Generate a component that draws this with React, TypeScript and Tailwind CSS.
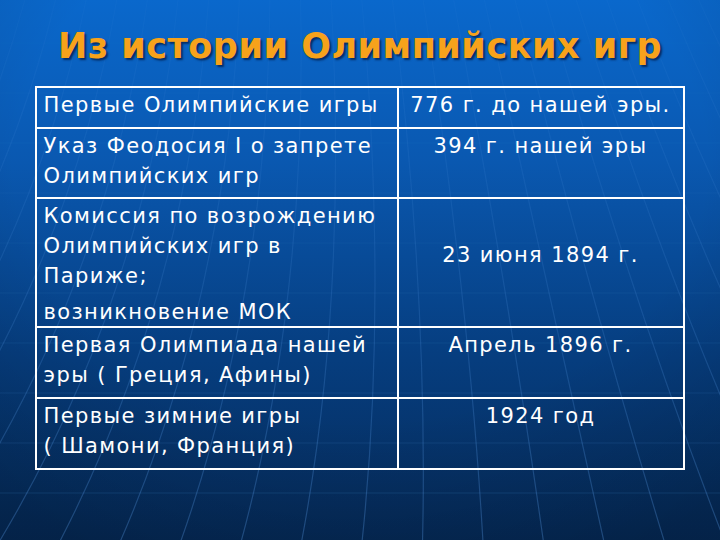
import React from "react";

const rows: { left: string[]; right: string; h: string; rightAlign: "top" | "middle" }[] = [
  { left: ["Первые Олимпийские игры"], right: "776 г. до нашей эры.", h: "h-[39px]", rightAlign: "top" },
  { left: ["Указ Феодосия I о запрете", "Олимпийских игр"], right: "394 г. нашей эры", h: "h-[70px]", rightAlign: "top" },
  { left: ["Комиссия по возрождению", "Олимпийских игр в", "Париже;", "возникновение МОК"], right: "23 июня 1894 г.", h: "h-[129px]", rightAlign: "middle" },
  { left: ["Первая Олимпиада нашей", "эры ( Греция, Афины)"], right: "Апрель 1896 г.", h: "h-[71px]", rightAlign: "top" },
  { left: ["Первые зимние игры", "( Шамони, Франция)"], right: "1924 год", h: "h-[71px]", rightAlign: "top" },
];

function Background() {
  const curves: string[] = [];
  for (let i = -14; i <= 14; i++) {
    const xb = 360 + i * 62;
    const xt = 360 + i * 30;
    const cx = 360 + i * 40 + 30;
    curves.push(`M ${xt} -20 Q ${cx} 300 ${xb} 560`);
  }
  const hs: number[] = [];
  for (let y = 43; y < 540; y += 50) hs.push(y);
  return (
    <svg className="absolute inset-0 w-full h-full pointer-events-none" viewBox="0 0 720 540" preserveAspectRatio="none">
      <defs>
        <linearGradient id="bg" x1="0" y1="0" x2="0" y2="1">
          <stop offset="0" stopColor="#0a68cc" />
          <stop offset="0.3" stopColor="#0a58b0" />
          <stop offset="0.65" stopColor="#063e80" />
          <stop offset="1" stopColor="#052a58" />
        </linearGradient>
        <radialGradient id="vig" cx="0.5" cy="0.3" r="0.8">
          <stop offset="0.6" stopColor="#000" stopOpacity="0" />
          <stop offset="1" stopColor="#000" stopOpacity="0.18" />
        </radialGradient>
        <linearGradient id="fade" x1="0" y1="0" x2="0" y2="1">
          <stop offset="0" stopColor="#fff" stopOpacity="0.15" />
          <stop offset="0.5" stopColor="#fff" stopOpacity="0.5" />
          <stop offset="1" stopColor="#fff" stopOpacity="1" />
        </linearGradient>
        <mask id="m">
          <rect width="720" height="540" fill="url(#fade)" />
        </mask>
      </defs>
      <rect width="720" height="540" fill="url(#bg)" />
      <rect width="720" height="540" fill="url(#vig)" />
      <g mask="url(#m)">
        {hs.map((y) => (
          <line key={y} x1="0" y1={y} x2="720" y2={y} stroke="#4a8ad8" strokeOpacity="0.2" strokeWidth="1" />
        ))}
        {curves.map((d, i) => (
          <path key={i} d={d} fill="none" stroke="#5a9ae6" strokeOpacity="0.32" strokeWidth="1.2" />
        ))}
      </g>
    </svg>
  );
}

export default function App() {
  const font = { fontFamily: '"DejaVu Sans", "Noto Sans", sans-serif' };
  return (
    <div className="relative w-[720px] h-[540px] overflow-hidden bg-[#0a4fa0]">
      <Background />
      <div className="relative flex flex-col items-center pt-[20px]" style={font}>
        <h1 className="text-[35px] leading-[52px] font-bold text-[#f7a21b] tracking-[0.5px] [text-shadow:2px_2px_2px_rgba(0,20,60,0.7)]">
          Из истории Олимпийских игр
        </h1>
        <div className="mt-[14px] ml-[-1px] w-[650px] border-2 border-white text-white text-[21px] leading-[30px] tracking-[1.4px]">
          {rows.map((r, i) => (
            <div key={i} className={`grid grid-cols-[362px_1fr] ${r.h} ${i > 0 ? "border-t-2 border-white" : ""}`}>
              <div className="pl-[7px] pt-[2px] border-r-2 border-white whitespace-nowrap">
                {r.left.map((l, j) => (
                  <div key={j} className={j === 3 ? "mt-[6px]" : ""}>{l}</div>
                ))}
              </div>
              <div className={`flex justify-center whitespace-nowrap ${r.rightAlign === "middle" ? "items-center pb-[16px]" : "items-start pt-[2px]"}`}>
                <span>{r.right}</span>
              </div>
            </div>
          ))}
        </div>
      </div>
    </div>
  );
}
